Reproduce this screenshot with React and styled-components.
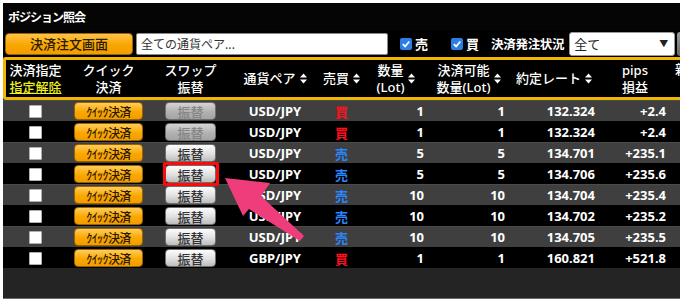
import React from "react";
import styled, { createGlobalStyle, css } from "styled-components";

const GlobalStyle = createGlobalStyle`
  html, body { margin: 0; padding: 0; background: #fff; overflow: hidden; }
  body { font-family: "Noto Sans", "Noto Sans CJK JP", sans-serif; }
  #root { width: 680px; height: 306px; }
`;

const COLS = "59px 87px 77px 92px 41px 68px 78px 92px 70px 80px";

const Stage = styled.div`
  position: relative;
  width: 680px;
  height: 306px;
  overflow: hidden;
  padding: 3px 0 0 3px;
  box-sizing: border-box;
`;

const Panel = styled.div`
  width: 700px;
  height: 295px;
  background: #242424;
  border-bottom: 1px solid #6a6a6a;
  display: flex;
  flex-direction: column;
`;

const TitleBar = styled.div`
  height: 27px;
  flex: none;
  background: #050505;
  display: flex;
  align-items: center;
  padding-left: 5px;
  color: #fff;
  font: 700 12px "Noto Sans CJK JP", sans-serif;
  letter-spacing: -1px;
`;

const Toolbar = styled.div`
  height: 27px;
  flex: none;
  background: #000;
  display: flex;
  align-items: center;
  padding-left: 2px;
`;

const OrangeButton = styled.div`
  width: 128px;
  height: 22px;
  box-sizing: border-box;
  border: 1px solid #9a6400;
  border-radius: 4px;
  background: linear-gradient(#ffc24a, #f9a600 55%, #f29c00);
  color: #2a1c00;
  font: 500 13px "Noto Sans CJK JP", sans-serif;
  display: flex;
  align-items: center;
  justify-content: center;
`;

const PairInput = styled.input`
  margin-left: 3px;
  width: 252px;
  height: 22px;
  box-sizing: border-box;
  border: 1px solid #8a8a8a;
  border-radius: 2px;
  background: #fff;
  color: #333;
  font: 12px "Noto Sans CJK JP", sans-serif;
  padding: 0 4px;
  outline: none;
`;

const CheckGroup = styled.label`
  display: flex;
  align-items: center;
  gap: 3px;
  margin-left: ${(p) => p.$ml}px;
  color: #fff;
  font: 700 13px "Noto Sans CJK JP", sans-serif;
`;

const BlueCheck = styled.span`
  width: 12px;
  height: 12px;
  border-radius: 2px;
  background: #2a7fe6;
  display: flex;
  align-items: center;
  justify-content: center;
`;

const ToolLabel = styled.span`
  margin-left: 12px;
  color: #fff;
  font: 700 12.5px "Noto Sans CJK JP", sans-serif;
  letter-spacing: -0.3px;
`;

const SelectBox = styled.div`
  margin-left: 5px;
  width: 106px;
  height: 24px;
  box-sizing: border-box;
  border: 1px solid #9a9a9a;
  border-radius: 3px;
  background: #fff;
  display: flex;
  align-items: center;
  justify-content: space-between;
  padding: 0 6px 0 4px;
  color: #222;
  font: 13px "Noto Sans CJK JP", sans-serif;
`;

const Caret = styled.span`
  font-size: 9px;
  color: #222;
`;

const GreyStub = styled.div`
  margin-left: 2px;
  width: 20px;
  height: 24px;
  border-radius: 3px;
  background: linear-gradient(#9a9a9a, #6a6a6a);
`;

const HeaderBox = styled.div`
  flex: none;
  height: 37px;
  border: 3px solid #f3b600;
  border-radius: 3px;
  background: #000;
  display: grid;
  grid-template-columns: ${COLS};
`;

const HeadCell = styled.div`
  display: flex;
  align-items: center;
  justify-content: center;
  gap: 4px;
  color: #fff;
  font: 500 13px "Noto Sans", "Noto Sans CJK JP", sans-serif;
  line-height: 17px;
  text-align: center;
  white-space: nowrap;
  overflow: hidden;
  ${(p) =>
    p.$left &&
    css`
      justify-content: flex-start;
      align-items: flex-start;
      padding: 1px 0 0 5px;
    `}
`;

const Lines = styled.div`
  display: flex;
  flex-direction: column;
  align-items: center;
  line-height: 17px;
`;

const ClearLink = styled.span`
  color: #f0f020;
  text-decoration: underline;
`;

const Rows = styled.div`
  display: flex;
  flex-direction: column;
`;

const Row = styled.div`
  height: 21px;
  box-sizing: border-box;
  padding-left: 3px;
  display: grid;
  grid-template-columns: ${COLS};
  align-items: center;
  background: ${(p) => (p.$alt ? "#3f3f3f" : "#000")};
  border-top: 1px solid ${(p) => (p.$alt ? "#4b4b4b" : "#000")};
`;

const Center = styled.div`
  display: flex;
  justify-content: center;
  align-items: center;
  position: relative;
`;

const WhiteBox = styled.span`
  width: 13px;
  height: 13px;
  box-sizing: border-box;
  background: #fff;
  border: 1px solid #b0b0b0;
  border-radius: 1px;
`;

const QuickButton = styled.div`
  width: 69px;
  height: 18px;
  box-sizing: border-box;
  border: 1px solid #9c6200;
  border-radius: 4px;
  background: linear-gradient(#ffcd5a, #faa800 55%, #f29c00);
  color: #2a1800;
  font: 500 12px "Noto Sans CJK JP", sans-serif;
  letter-spacing: -0.6px;
  display: flex;
  align-items: center;
  justify-content: center;
`;

const SwapButton = styled.div`
  position: relative;
  width: 51px;
  height: 18px;
  box-sizing: border-box;
  border: 1px solid #6e6e6e;
  border-radius: 4px;
  display: flex;
  align-items: center;
  justify-content: center;
  font: 500 13px "Noto Sans CJK JP", sans-serif;
  ${(p) =>
    p.$disabled
      ? css`
          background: linear-gradient(#d4d4d4, #b2b2b2 55%, #a4a4a4);
          color: #858585;
        `
      : css`
          background: linear-gradient(#fdfdfd, #e0e0e0 55%, #bdbdbd);
          color: #333;
        `}
`;

const Highlight = styled.span`
  position: absolute;
  top: -4px;
  bottom: -4px;
  left: -3px;
  right: -4px;
  border: 3px solid #ff0a0a;
  border-radius: 2px;
  pointer-events: none;
`;

const Pair = styled.div`
  text-align: center;
  color: #fff;
  font: 700 13px "Noto Sans", sans-serif;
`;

const Side = styled.div`
  text-align: center;
  font: 700 13px "Noto Sans CJK JP", sans-serif;
  color: ${(p) => (p.$sell ? "#2a86ff" : "#ff1020")};
`;

const Num = styled.div`
  text-align: right;
  padding-right: ${(p) => p.$pr}px;
  color: #fff;
  font: 700 13px "Noto Sans", sans-serif;
`;

const ArrowLayer = styled.svg`
  position: absolute;
  left: 0;
  top: 0;
  pointer-events: none;
`;

function SortIcon() {
  return (
    <svg width="7" height="11" viewBox="0 0 7 11">
      <polygon points="0,4.5 3.5,0.5 7,4.5" fill="#fff" />
      <polygon points="0,6.5 7,6.5 3.5,10.5" fill="#fff" />
    </svg>
  );
}

function Check() {
  return (
    <BlueCheck>
      <svg width="10" height="10" viewBox="0 0 10 10">
        <polyline points="1.8,5.2 4.1,7.5 8.3,2.5" fill="none" stroke="#fff" strokeWidth="1.8" />
      </svg>
    </BlueCheck>
  );
}

const rows = [
  { pair: "USD/JPY", sell: false, qty: 1, avail: 1, rate: "132.324", pips: "+2.4", dis: true },
  { pair: "USD/JPY", sell: false, qty: 1, avail: 1, rate: "132.324", pips: "+2.4", dis: true },
  { pair: "USD/JPY", sell: true, qty: 5, avail: 5, rate: "134.701", pips: "+235.1" },
  { pair: "USD/JPY", sell: true, qty: 5, avail: 5, rate: "134.706", pips: "+235.6", mark: true },
  { pair: "USD/JPY", sell: true, qty: 10, avail: 10, rate: "134.704", pips: "+235.4" },
  { pair: "USD/JPY", sell: true, qty: 10, avail: 10, rate: "134.702", pips: "+235.2" },
  { pair: "USD/JPY", sell: true, qty: 10, avail: 10, rate: "134.705", pips: "+235.5" },
  { pair: "GBP/JPY", sell: false, qty: 1, avail: 1, rate: "160.821", pips: "+521.8" },
];

export default function App() {
  return (
    <>
      <GlobalStyle />
      <Stage>
        <Panel>
          <TitleBar>ポジション照会</TitleBar>
          <Toolbar>
            <OrangeButton>決済注文画面</OrangeButton>
            <PairInput readOnly value="全ての通貨ペア..." />
            <CheckGroup $ml={12}>
              <Check />
              売
            </CheckGroup>
            <CheckGroup $ml={23}>
              <Check />
              買
            </CheckGroup>
            <ToolLabel>決済発注状況</ToolLabel>
            <SelectBox>
              全て
              <Caret>▼</Caret>
            </SelectBox>
            <GreyStub />
          </Toolbar>
          <HeaderBox>
            <HeadCell>
              <Lines>
                <span>決済指定</span>
                <ClearLink>指定解除</ClearLink>
              </Lines>
            </HeadCell>
            <HeadCell>
              <Lines>
                <span>クイック</span>
                <span>決済</span>
              </Lines>
            </HeadCell>
            <HeadCell>
              <Lines>
                <span>スワップ</span>
                <span>振替</span>
              </Lines>
            </HeadCell>
            <HeadCell>
              通貨ペア
              <SortIcon />
            </HeadCell>
            <HeadCell>
              売買
              <SortIcon />
            </HeadCell>
            <HeadCell>
              <Lines>
                <span>数量</span>
                <span>(Lot)</span>
              </Lines>
              <SortIcon />
            </HeadCell>
            <HeadCell>
              <Lines>
                <span>決済可能</span>
                <span>数量(Lot)</span>
              </Lines>
              <SortIcon />
            </HeadCell>
            <HeadCell>
              約定レート
              <SortIcon />
            </HeadCell>
            <HeadCell>
              <Lines>
                <span>pips</span>
                <span>損益</span>
              </Lines>
            </HeadCell>
            <HeadCell $left>新規</HeadCell>
          </HeaderBox>
          <Rows>
            {rows.map((r, i) => (
              <Row key={i} $alt={i % 2 === 0}>
                <Center>
                  <WhiteBox />
                </Center>
                <Center>
                  <QuickButton>ｸｲｯｸ決済</QuickButton>
                </Center>
                <Center>
                  <SwapButton $disabled={r.dis}>
                    振替
                    {r.mark && <Highlight />}
                  </SwapButton>
                </Center>
                <Pair>{r.pair}</Pair>
                <Side $sell={r.sell}>{r.sell ? "売" : "買"}</Side>
                <Num $pr={6}>{r.qty}</Num>
                <Num $pr={3}>{r.avail}</Num>
                <Num $pr={5}>{r.rate}</Num>
                <Num $pr={4}>{r.pips}</Num>
                <div />
              </Row>
            ))}
          </Rows>
        </Panel>
        <ArrowLayer width="680" height="306" viewBox="0 0 680 306">
          <polygon
            points="225,178 270,183 261,196 304,236 300,241 249,209 243,216"
            fill="#ef3d7b"
          />
        </ArrowLayer>
      </Stage>
    </>
  );
}
